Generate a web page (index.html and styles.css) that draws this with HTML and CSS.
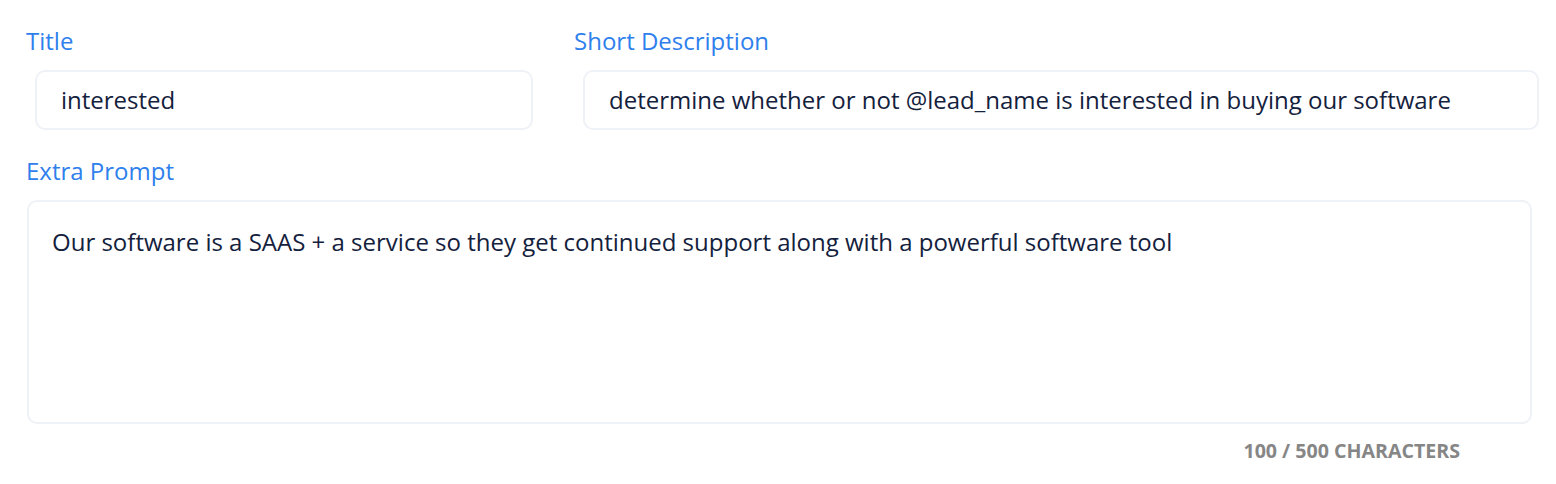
FILE: index.html
```html
<!DOCTYPE html>
<html lang="en">
<head>
<meta charset="utf-8">
<title>Prompt form</title>
<link rel="stylesheet" href="styles.css">
</head>
<body>
<form class="form">
  <div class="row">
    <div class="field field-title">
      <label class="label" for="title">Title</label>
      <div class="input" id="title">interested</div>
    </div>
    <div class="field field-desc">
      <label class="label" for="desc">Short Description</label>
      <div class="input" id="desc">determine whether or not @lead_name is interested in buying our software</div>
    </div>
  </div>
  <div class="field field-prompt">
    <label class="label" for="prompt">Extra Prompt</label>
    <div class="textarea" id="prompt">Our software is a SAAS + a service so they get continued support along with a powerful software tool</div>
    <div class="counter">100 / 500 characters</div>
  </div>
</form>
</body>
</html>
```

FILE: styles.css
```css
html, body {
  margin: 0;
  padding: 0;
  background: #ffffff;
}

body {
  font-family: "Open Sans", "Noto Sans", sans-serif;
  color: #14213d;
}

.form {
  padding: 25px 8px 0 26px;
  display: flex;
  flex-direction: column;
}

.row {
  display: flex;
  gap: 32px;
}

.field {
  display: flex;
  flex-direction: column;
}

.field-title {
  width: 516px;
}

.field-desc {
  flex: 1;
}

.label {
  font-size: 24px;
  line-height: 32px;
  color: #2f80ed;
  margin-bottom: 13px;
}

.input {
  margin: 0 9px;
  box-sizing: border-box;
  height: 60px;
  border: 2px solid #eef2f7;
  border-radius: 10px;
  padding: 0 24px;
  font-size: 24px;
  line-height: 56px;
  white-space: nowrap;
  overflow: hidden;
}

.field-prompt {
  margin-top: 25px;
}

.textarea {
  margin: 0 16px 0 1px;
  box-sizing: border-box;
  height: 224px;
  border: 2px solid #eef2f7;
  border-radius: 10px;
  padding: 24px 23px 0 23px;
  font-size: 24px;
  line-height: 32px;
}

.counter {
  align-self: flex-end;
  margin: 14px 88px 0 0;
  font-size: 19.6px;
  line-height: 26px;
  font-weight: 700;
  color: #868686;
  text-transform: uppercase;
}
```
